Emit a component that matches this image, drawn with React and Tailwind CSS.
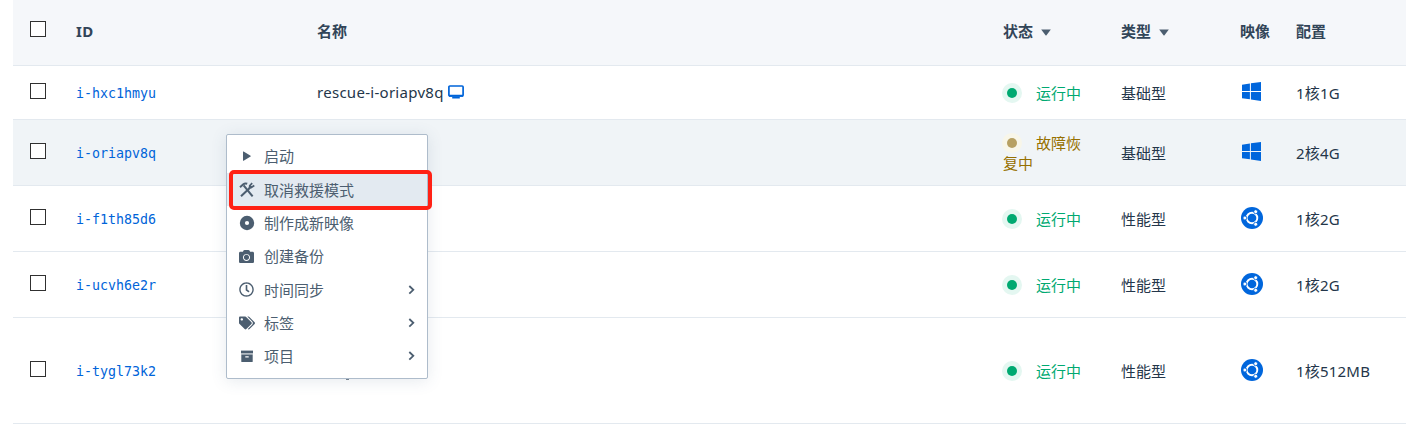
import { FaCamera, FaRegClock, FaTags } from "react-icons/fa";

const GRID =
  "grid grid-cols-[63px_241px_686px_118px_119px_56px_1fr] items-center border-b border-[#e3e9ef]";

const rows = [
  { id: "i-hxc1hmyu", name: "rescue-i-oriapv8q", type: "基础型", os: "win", spec: "1核1G", h: "h-[54px]" },
  { id: "i-oriapv8q", type: "基础型", os: "win", spec: "2核4G", h: "h-[66px]", rescue: true },
  { id: "i-f1th85d6", type: "性能型", os: "ubuntu", spec: "1核2G", h: "h-[66px]" },
  { id: "i-ucvh6e2r", type: "性能型", os: "ubuntu", spec: "1核2G", h: "h-[66px]" },
  { id: "i-tygl73k2", type: "性能型", os: "ubuntu", spec: "1核512MB", h: "h-[106px]" },
];

function Checkbox() {
  return <span className="mb-1 ml-[17px] block size-4 border border-[#303030] bg-white" />;
}

function Caret() {
  return (
    <svg className="ml-2 mt-[3px] h-[7px] w-[10px]" viewBox="0 0 10 7" fill="#4c5e70">
      <path d="M0.2 0.6h9.6L5.5 6.2q-.5.6-1 0z" />
    </svg>
  );
}

function Monitor() {
  return (
    <svg className="ml-1 h-[14px] w-4" viewBox="0 0 16 14" fill="none">
      <rect x="0.9" y="1" width="14.2" height="10" rx="1" stroke="#0064d9" strokeWidth="1.7" />
      <path d="M1 9.8h14v2H1z M4.2 12h7.6v1.6H4.2z" fill="#0064d9" />
    </svg>
  );
}

function Windows() {
  return (
    <svg className="mb-[3px] ml-[2px] h-[19px] w-[19px]" viewBox="0 0 19 19" fill="#0066dc">
      <path d="M0 2.7 7.9 1.5V8.9H0zM8.9 1.3 19 0V8.9H8.9zM0 9.9H7.9V17.3L0 16.2zM8.9 9.9H19V19L8.9 17.5z" />
    </svg>
  );
}

function Ubuntu() {
  return (
    <svg className="mb-px ml-px h-[22px] w-[22px]" viewBox="0 0 22 22">
      <circle cx="11" cy="11" r="11" fill="#0066dc" />
      <circle cx="11" cy="11" r="5.3" fill="none" stroke="#fff" strokeWidth="1.9" />
      <g fill="#fff" stroke="#0066dc" strokeWidth="0.9">
        <circle cx="3.9" cy="11" r="2" />
        <circle cx="14.7" cy="4.7" r="2" />
        <circle cx="14.7" cy="17.3" r="2" />
      </g>
    </svg>
  );
}

function Status({ rescue }) {
  return (
    <div className={rescue ? "w-20 leading-5 text-[#967000]" : "w-20 leading-5 text-[#00a971]"}>
      <span
        className={
          rescue
            ? "mr-[14px] -ml-px inline-flex size-5 items-center justify-center rounded-full bg-[#f8f6e9] align-top"
            : "mr-[14px] -ml-px inline-flex size-5 items-center justify-center rounded-full bg-[#e4f7f1] align-top"
        }
      >
        <span className={rescue ? "size-[10px] rounded-full bg-[#b7a062]" : "size-[10px] rounded-full bg-[#00a971]"} />
      </span>
      {rescue ? "故障恢复中" : "运行中"}
    </div>
  );
}

function Play() {
  return (
    <svg className="size-4" viewBox="0 0 16 16" fill="currentColor">
      <path d="M4 3.8q0-.6.6-.3l7 4.2q.5.4 0 .8l-7 4.2q-.6.3-.6-.3z" />
    </svg>
  );
}

function Tools() {
  return (
    <svg className="size-4" viewBox="0 0 16 16" fill="none" stroke="currentColor">
      <path d="M1 5.2 4.3 2.3Q6 1 8.2 1.8" strokeWidth="2" />
      <path d="M4.6 3.4 13.6 14.3" strokeWidth="2.1" />
      <path d="M2 14.3 11 5.8" strokeWidth="2" />
      <path d="M13.2 1.2 10.9 3.5 12.5 5.3 15.3 3.6M10.9 3.5 10.4 6.2 12.5 5.3" strokeWidth="1.7" />
    </svg>
  );
}

function Disc() {
  return (
    <svg className="size-4" viewBox="0 0 16 16">
      <circle cx="8" cy="8" r="7.2" fill="currentColor" />
      <circle cx="8" cy="8" r="2.1" fill="#fff" />
    </svg>
  );
}

function Archive() {
  return (
    <svg className="size-4" viewBox="0 0 16 16" fill="currentColor">
      <path d="M2 2.6h12v2.6H2z" />
      <path d="M2 5.2h12v1.2H2z" opacity="0.35" />
      <path fillRule="evenodd" d="M2.3 6.4h11.4v7q0 .7-.7.7H3q-.7 0-.7-.7zM6.3 8.2v1.3h3.4V8.2z" />
    </svg>
  );
}

function Chevron() {
  return (
    <svg className="mr-[12px] ml-auto h-[10px] w-[7px]" viewBox="0 0 7 10" fill="none" stroke="currentColor" strokeWidth="1.8">
      <path d="M1.3 1 5.3 4.8 1.3 8.6" />
    </svg>
  );
}

const menu = [
  { label: "启动", icon: <Play /> },
  { label: "取消救援模式", icon: <Tools />, active: true },
  { label: "制作成新映像", icon: <Disc /> },
  { label: "创建备份", icon: <FaCamera className="size-[15px]" /> },
  { label: "时间同步", icon: <FaRegClock className="size-[15px]" />, sub: true },
  { label: "标签", icon: <FaTags className="size-4" />, sub: true },
  { label: "项目", icon: <Archive />, sub: true },
];

export default function App() {
  return (
    <div className="relative h-[436px] overflow-hidden bg-white pl-[13px] font-['Noto_Sans','Noto_Sans_CJK_SC',sans-serif] text-[15px] leading-5 text-[#24364a]">
      <div className={`${GRID} h-[66px] bg-[#f5f7fa] pb-1 font-bold text-[#324558]`}>
        <Checkbox />
        <span className="tracking-[0.4px]">ID</span>
        <span>名称</span>
        <span className="flex items-center">状态<Caret /></span>
        <span className="flex items-center">类型<Caret /></span>
        <span>映像</span>
        <span>配置</span>
      </div>
      {rows.map((r) => (
        <div key={r.id} className={`${GRID} ${r.h} ${r.rescue ? "bg-[#f0f4f7]" : "bg-white"}`}>
          <Checkbox />
          <span className="pt-[2px] font-['DejaVu_Sans_Mono',monospace] text-[13.3px] text-[#0064d9]">{r.id}</span>
          <span className="flex items-center pb-px tracking-[0.28px]">
            {r.name}
            {r.name && <Monitor />}
          </span>
          <Status rescue={r.rescue} />
          <span>{r.type}</span>
          {r.os === "win" ? <Windows /> : <Ubuntu />}
          <span className="tracking-[0.2px]">{r.spec}</span>
        </div>
      ))}

      <div className="absolute top-[134px] left-[226px] h-[245px] w-[202px] rounded-[2px] border border-[#aebccb] bg-white py-[4.5px] text-[#4c5e70] shadow-[0_2px_16px_rgba(60,90,120,0.13)]">
        {menu.map((m) => (
          <div key={m.label} className={`flex h-[33.36px] items-center pl-[11.5px] ${m.active ? "bg-[#e3eaf1]" : ""}`}>
            <span className="flex w-4 justify-center">{m.icon}</span>
            <span className="ml-[9.5px]">{m.label}</span>
            {m.sub && <Chevron />}
          </div>
        ))}
      </div>
      <div className="absolute top-[379px] left-[346px] h-px w-[3px] bg-[#73808e]" />
      <div className="absolute top-[170px] left-[229px] h-10 w-[203px] rounded-[5px] border-4 border-[#ff2115]" />
    </div>
  );
}
